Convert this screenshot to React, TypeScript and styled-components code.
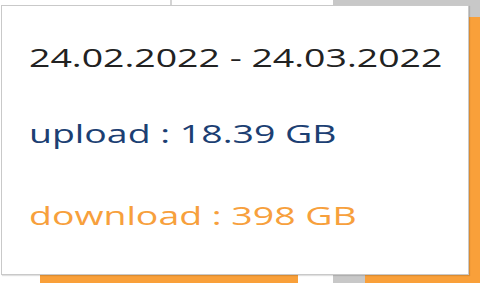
import React from "react";
import styled, { createGlobalStyle } from "styled-components";

const Global = createGlobalStyle`
  html, body { margin: 0; padding: 0; background: #ffffff; }
  body { width: 480px; height: 283px; overflow: hidden; }
`;

const Chart = styled.div`
  position: relative;
  width: 480px;
  height: 283px;
  display: flex;
  flex-direction: row;
  align-items: stretch;
  background: #ffffff;
  overflow: hidden;
`;

const Column = styled.div<{ $w: number; $top: number; $topColor: string; $fill: string }>`
  width: ${(p) => p.$w}px;
  flex: none;
  box-sizing: border-box;
  background: ${(p) => p.$fill};
  border-top: ${(p) => p.$top}px solid ${(p) => p.$topColor};
`;

const Tooltip = styled.div`
  position: absolute;
  left: 1px;
  top: 5px;
  width: 468px;
  height: 270px;
  box-sizing: border-box;
  background: #ffffff;
  border: 1px solid #c9c9c9;
  box-shadow: 1px 1px 1px rgba(0, 0, 0, 0.12);
  display: flex;
  flex-direction: column;
  padding: 33px 0 0 27px;
`;

const Line = styled.div<{ $color: string; $gap: number }>`
  font-family: "Open Sans", "Liberation Sans", sans-serif;
  font-size: 26px;
  line-height: 36px;
  height: 36px;
  color: ${(p) => p.$color};
  margin-top: ${(p) => p.$gap}px;
  white-space: nowrap;
  transform: scaleX(1.44);
  transform-origin: left center;
`;

export default function App() {
  return (
    <>
      <Global />
      <Chart>
        <Column $w={40} $top={0} $topColor="#ffffff" $fill="#ffffff" />
        <Column $w={130} $top={12} $topColor="#ffffff" $fill="#f9a03a" />
        <Column $w={2} $top={6} $topColor="#d4d4d4" $fill="#f9a03a" />
        <Column $w={126} $top={12} $topColor="#ffffff" $fill="#f9a03a" />
        <Column $w={35} $top={0} $topColor="#ffffff" $fill="#ffffff" />
        <Column $w={32} $top={0} $topColor="#c8c8c8" $fill="#c8c8c8" />
        <Column $w={115} $top={17} $topColor="#c8c8c8" $fill="#f9a03a" />
        <Tooltip>
          <Line $color="#222222" $gap={0}>24.02.2022 - 24.03.2022</Line>
          <Line $color="#1c3f73" $gap={40}>upload : 18.39 GB</Line>
          <Line $color="#f7a03c" $gap={46}>download : 398 GB</Line>
        </Tooltip>
      </Chart>
    </>
  );
}
